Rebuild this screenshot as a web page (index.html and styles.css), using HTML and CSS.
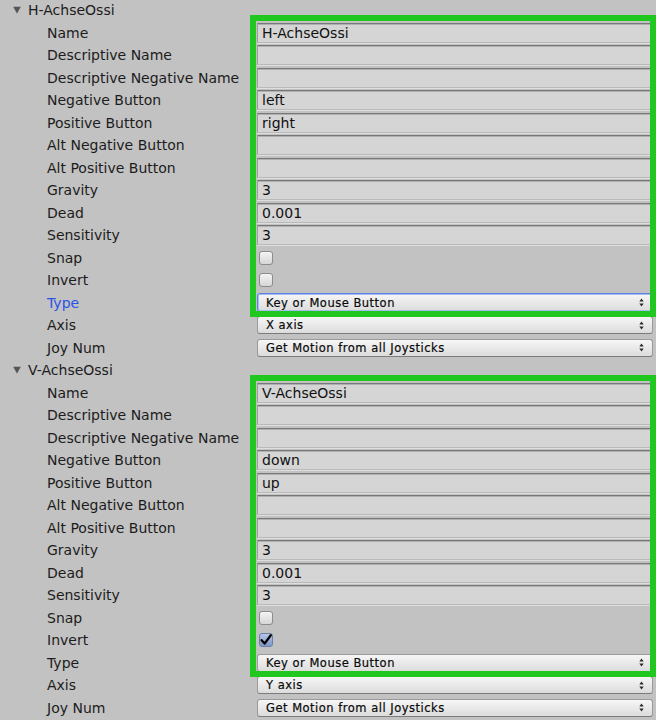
FILE: index.html
```html
<!DOCTYPE html>
<html>
<head>
<meta charset="utf-8">
<link rel="stylesheet" href="styles.css">
</head>
<body>
<div class="panel">
  <section class="axis">
    <div class="head"><svg class="tri" width="8" height="8" viewBox="0 0 8 8"><path d="M0.2 0.8L7.8 0.8L4 7.6Z"/></svg><span>H-AchseOssi</span></div>
    <div class="row"><span class="label">Name</span><div class="field">H-AchseOssi</div></div>
    <div class="row"><span class="label">Descriptive Name</span><div class="field"></div></div>
    <div class="row"><span class="label">Descriptive Negative Name</span><div class="field"></div></div>
    <div class="row"><span class="label">Negative Button</span><div class="field">left</div></div>
    <div class="row"><span class="label">Positive Button</span><div class="field">right</div></div>
    <div class="row"><span class="label">Alt Negative Button</span><div class="field"></div></div>
    <div class="row"><span class="label">Alt Positive Button</span><div class="field"></div></div>
    <div class="row"><span class="label">Gravity</span><div class="field">3</div></div>
    <div class="row"><span class="label">Dead</span><div class="field">0.001</div></div>
    <div class="row"><span class="label">Sensitivity</span><div class="field">3</div></div>
    <div class="row"><span class="label">Snap</span><div><span class="check"></span></div></div>
    <div class="row"><span class="label">Invert</span><div><span class="check"></span></div></div>
    <div class="row"><span class="label focus-label">Type</span><div class="popup focused"><span>Key or Mouse Button</span><svg class="arrows" width="5" height="9" viewBox="0 0 5 9"><path d="M0.3 3.6L2.5 0.4L4.7 3.6Z M0.3 5.4L2.5 8.6L4.7 5.4Z"/></svg></div></div>
    <div class="row"><span class="label">Axis</span><div class="popup"><span>X axis</span><svg class="arrows" width="5" height="9" viewBox="0 0 5 9"><path d="M0.3 3.6L2.5 0.4L4.7 3.6Z M0.3 5.4L2.5 8.6L4.7 5.4Z"/></svg></div></div>
    <div class="row"><span class="label">Joy Num</span><div class="popup"><span>Get Motion from all Joysticks</span><svg class="arrows" width="5" height="9" viewBox="0 0 5 9"><path d="M0.3 3.6L2.5 0.4L4.7 3.6Z M0.3 5.4L2.5 8.6L4.7 5.4Z"/></svg></div></div>
    <div class="highlight"></div>
  </section>
  <section class="axis">
    <div class="head"><svg class="tri" width="8" height="8" viewBox="0 0 8 8"><path d="M0.2 0.8L7.8 0.8L4 7.6Z"/></svg><span>V-AchseOssi</span></div>
    <div class="row"><span class="label">Name</span><div class="field">V-AchseOssi</div></div>
    <div class="row"><span class="label">Descriptive Name</span><div class="field"></div></div>
    <div class="row"><span class="label">Descriptive Negative Name</span><div class="field"></div></div>
    <div class="row"><span class="label">Negative Button</span><div class="field">down</div></div>
    <div class="row"><span class="label">Positive Button</span><div class="field">up</div></div>
    <div class="row"><span class="label">Alt Negative Button</span><div class="field"></div></div>
    <div class="row"><span class="label">Alt Positive Button</span><div class="field"></div></div>
    <div class="row"><span class="label">Gravity</span><div class="field">3</div></div>
    <div class="row"><span class="label">Dead</span><div class="field">0.001</div></div>
    <div class="row"><span class="label">Sensitivity</span><div class="field">3</div></div>
    <div class="row"><span class="label">Snap</span><div><span class="check"></span></div></div>
    <div class="row"><span class="label">Invert</span><div><span class="check checked"><svg width="14" height="14" viewBox="0 0 14 14"><path d="M2.6 7.2L5.6 10.6L11.8 2.2" fill="none" stroke="#000" stroke-width="2.3" stroke-linecap="round" stroke-linejoin="round"/></svg></span></div></div>
    <div class="row"><span class="label">Type</span><div class="popup"><span>Key or Mouse Button</span><svg class="arrows" width="5" height="9" viewBox="0 0 5 9"><path d="M0.3 3.6L2.5 0.4L4.7 3.6Z M0.3 5.4L2.5 8.6L4.7 5.4Z"/></svg></div></div>
    <div class="row"><span class="label">Axis</span><div class="popup"><span>Y axis</span><svg class="arrows" width="5" height="9" viewBox="0 0 5 9"><path d="M0.3 3.6L2.5 0.4L4.7 3.6Z M0.3 5.4L2.5 8.6L4.7 5.4Z"/></svg></div></div>
    <div class="row"><span class="label">Joy Num</span><div class="popup"><span>Get Motion from all Joysticks</span><svg class="arrows" width="5" height="9" viewBox="0 0 5 9"><path d="M0.3 3.6L2.5 0.4L4.7 3.6Z M0.3 5.4L2.5 8.6L4.7 5.4Z"/></svg></div></div>
    <div class="highlight"></div>
  </section>
</div>
</body>
</html>
```

FILE: styles.css
```css
html, body {
  margin: 0;
  padding: 0;
  background: #ffffff;
  overflow: hidden;
}

.panel {
  background: #c2c2c2;
  margin-top: -1.25px;
  padding-bottom: 1.25px;
  font-family: "DejaVu Sans", sans-serif;
  font-size: 14px;
  color: #1c1c1c;
}

.axis {
  position: relative;
}

.head {
  height: 22.5px;
  display: flex;
  align-items: center;
  padding-left: 13px;
  gap: 7px;
}

.tri {
  fill: #555555;
  flex: none;
}

.row {
  height: 22.5px;
  display: grid;
  grid-template-columns: 47px 210px 396px;
  align-items: center;
}

.label {
  grid-column: 2;
  white-space: nowrap;
}

.focus-label {
  color: #2a52e6;
}

.row > div {
  grid-column: 3;
  display: flex;
  align-items: center;
}

.field {
  box-sizing: border-box;
  height: 20px;
  line-height: 18px;
  padding-left: 4px;
  background: #d5d5d5;
  border: 1px solid #9c9c9c;
  border-top-color: #787878;
  border-bottom-color: #b9b9b9;
  box-shadow: inset 0 1px 0 #b0b0b0, 0 1px 0 #dedede;
  color: #111;
  white-space: nowrap;
}

.check {
  box-sizing: border-box;
  width: 14px;
  height: 14px;
  margin-left: 2px;
  border: 1px solid #8c8c8c;
  border-radius: 3px;
  background: linear-gradient(#f4f4f4, #d6d6d6);
  display: block;
}

.check.checked {
  background: linear-gradient(#b5c6e6, #7f98c8);
  border-color: #6a7fa8;
  position: relative;
}

.check.checked svg {
  position: absolute;
  left: -1px;
  top: -1px;
}

.popup {
  box-sizing: border-box;
  height: 18px;
  padding: 0 8px 0 8px;
  border: 1px solid #9a9a9a;
  border-bottom-color: #7c7c7c;
  border-radius: 3px;
  background: linear-gradient(#f6f6f6, #dcdcdc);
  justify-content: space-between;
  font-size: 11.5px;
  letter-spacing: 0.5px;
  color: #0a0a0a;
  -webkit-text-stroke: 0.2px #0a0a0a;
  white-space: nowrap;
}

.popup.focused {
  height: 19px;
  border-color: #5b7fe2;
  box-shadow: inset 0 0 0 1px #a9bcf0;
}

.arrows {
  fill: #2a2a2a;
  flex: none;
}

.highlight {
  position: absolute;
  top: 16.25px;
  left: 250px;
  width: 406px;
  height: 302px;
  box-sizing: border-box;
  border: 6px solid #1fc71f;
  pointer-events: none;
}
```
